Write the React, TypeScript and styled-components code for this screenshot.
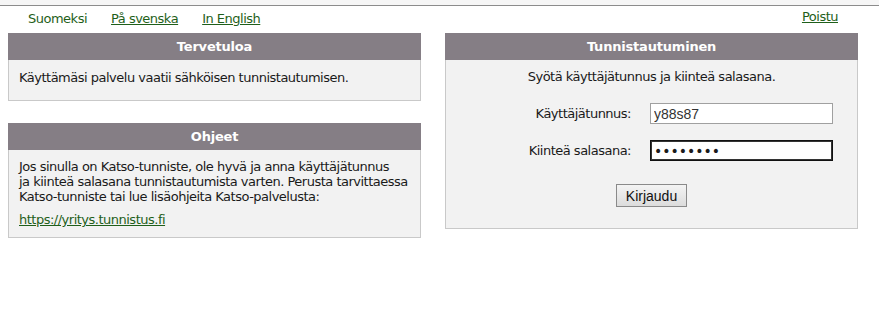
import React from 'react'
import styled, { createGlobalStyle } from 'styled-components'

const GlobalStyle = createGlobalStyle`
  body {
    margin: 0;
    background: #ffffff;
    font-family: "DejaVu Sans", Verdana, sans-serif;
    font-size: 13px;
    letter-spacing: -0.5px;
    color: #1a1a1a;
  }
`

const LINK = '#1f5f1a'

const TopStrip = styled.div`
  height: 5px;
  background: #f6f6f6;
  border-bottom: 1px solid #8c8c8c;
`

const NavRow = styled.div`
  display: flex;
  align-items: flex-start;
  height: 27px;
  padding: 0 0 0 28px;
`

const LangLinks = styled.div`
  display: flex;
  gap: 24px;
  padding-top: 5px;
`

const NavLink = styled.a<{ $current?: boolean }>`
  color: ${LINK};
  text-decoration: ${p => (p.$current ? 'none' : 'underline')};
  line-height: 16px;
  cursor: pointer;
`

const LogoutLink = styled(NavLink)`
  margin-left: auto;
  margin-right: 41px;
  padding-top: 3px;
`

const Columns = styled.div`
  display: flex;
  gap: 24px;
  padding-left: 8px;
  align-items: flex-start;
`

const Column = styled.div`
  width: 413px;
  display: flex;
  flex-direction: column;
  gap: 22px;
`

const Panel = styled.section`
  border: 1px solid #c9c9c9;
  border-top: none;
  background: #f2f2f2;
`

const PanelHeader = styled.div`
  height: 27px;
  background: #857e85;
  color: #ffffff;
  font-weight: bold;
  letter-spacing: -0.2px;
  text-align: center;
  line-height: 27px;
  margin: 0 -1px;
`

const PanelBody = styled.div<{ $pad?: string }>`
  padding: ${p => p.$pad || '10px 10px 14px'};
  line-height: 16px;
`

const Para = styled.p`
  margin: 0;
  line-height: 15px;
  white-space: nowrap;
`

const LinkPara = styled.p`
  margin: 8px 0 0;
  line-height: 16px;
`

const Intro = styled.div`
  text-align: center;
  line-height: 16px;
`

const FormGrid = styled.div`
  display: grid;
  grid-template-columns: 185px 183px;
  column-gap: 19px;
  row-gap: 16px;
  align-items: center;
  margin-top: 18px;
`

const Label = styled.label`
  text-align: right;
  line-height: 16px;
`

const Input = styled.input`
  box-sizing: border-box;
  width: 183px;
  height: 21px;
  margin: 0;
  padding: 1px 3px;
  font-family: "Liberation Sans", Arial, sans-serif;
  font-size: 14px;
  letter-spacing: 0;
  color: #333;
  background: #fff;
  border: 1px solid #a0a0a0;
  outline: none;
`

const PasswordInput = styled(Input)`
  font-family: "DejaVu Sans", Verdana, sans-serif;
  font-size: 14px;
  letter-spacing: 0;
  color: #1a1a1a;
  border-color: #111;
  outline: 1px solid #333;
  outline-offset: -2px;
`

const ButtonRow = styled.div`
  display: flex;
  justify-content: center;
  margin-top: 23px;
`

const Button = styled.button`
  height: 23px;
  padding: 0 9px;
  font-family: "Liberation Sans", Arial, sans-serif;
  font-size: 14px;
  letter-spacing: 0;
  color: #111;
  border: 1px solid #8a8a8a;
  border-radius: 0;
  background: linear-gradient(#f4f4f4, #dcdcdc);
`

export default function App() {
  return (
    <>
      <GlobalStyle />
      <TopStrip />
      <NavRow>
        <LangLinks>
          <NavLink $current>Suomeksi</NavLink>
          <NavLink>På svenska</NavLink>
          <NavLink>In English</NavLink>
        </LangLinks>
        <LogoutLink>Poistu</LogoutLink>
      </NavRow>
      <Columns>
        <Column>
          <Panel>
            <PanelHeader>Tervetuloa</PanelHeader>
            <PanelBody>Käyttämäsi palvelu vaatii sähköisen tunnistautumisen.</PanelBody>
          </Panel>
          <Panel>
            <PanelHeader>Ohjeet</PanelHeader>
            <PanelBody $pad="9px 10px 9px">
              <Para>
                Jos sinulla on Katso-tunniste, ole hyvä ja anna käyttäjätunnus<br />
                ja kiinteä salasana tunnistautumista varten. Perusta tarvittaessa<br />
                Katso-tunniste tai lue lisäohjeita Katso-palvelusta:
              </Para>
              <LinkPara>
                <NavLink>https://yritys.tunnistus.fi</NavLink>
              </LinkPara>
            </PanelBody>
          </Panel>
        </Column>
        <Column>
          <Panel>
            <PanelHeader>Tunnistautuminen</PanelHeader>
            <PanelBody $pad="9px 0 21px">
              <Intro>Syötä käyttäjätunnus ja kiinteä salasana.</Intro>
              <FormGrid>
                <Label>Käyttäjätunnus:</Label>
                <Input defaultValue="y88s87" />
                <Label>Kiinteä salasana:</Label>
                <PasswordInput type="password" defaultValue="salasana" />
              </FormGrid>
              <ButtonRow>
                <Button>Kirjaudu</Button>
              </ButtonRow>
            </PanelBody>
          </Panel>
        </Column>
      </Columns>
    </>
  )
}
